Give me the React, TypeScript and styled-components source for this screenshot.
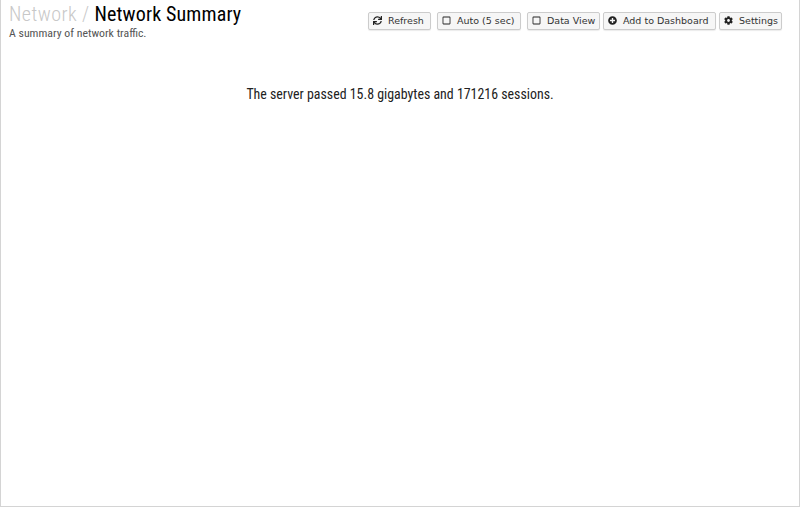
import styled, { createGlobalStyle } from 'styled-components'
import { FaSync, FaRegSquare, FaPlusCircle, FaCog } from 'react-icons/fa'

const GlobalStyle = createGlobalStyle`
  html, body {
    margin: 0;
    padding: 0;
    height: 100%;
    background: #fff;
  }
  #root {
    height: 100%;
  }
`

const Page = styled.div`
  box-sizing: border-box;
  width: 800px;
  height: 507px;
  border: 1px solid #d4d4d4;
  border-top: none;
  font-family: Roboto, sans-serif;
  font-stretch: 87%;
  color: #222;
`

const Header = styled.div`
  display: flex;
  justify-content: space-between;
  align-items: flex-start;
  padding: 2px 17px 0 8px;
`

const TitleBlock = styled.div`
  display: flex;
  flex-direction: column;
`

const Title = styled.h1`
  margin: 0;
  font-size: 20px;
  line-height: 24px;
  font-weight: 400;
  letter-spacing: 0.13px;
  color: #000;
  white-space: pre;
`

const Parent = styled.span`
  color: #c8c8c8;
  font-weight: 300;
  letter-spacing: 0.45px;
`

const Subtitle = styled.div`
  font-size: 11.8px;
  line-height: 14px;
  color: #555;
`

const Toolbar = styled.div`
  display: flex;
  gap: 3px;
  margin-top: 10px;
`

const Button = styled.button<{ $gap?: number; $width: number }>`
  display: flex;
  align-items: center;
  gap: 6px;
  box-sizing: border-box;
  width: ${p => p.$width}px;
  height: 18px;
  padding: 0 0 1px 4px;
  margin-right: ${p => p.$gap ?? 0}px;
  border: 1px solid #ccc;
  border-radius: 2px;
  background: #f6f6f6;
  box-shadow: 0 1px 1px rgba(0, 0, 0, 0.08);
  font-family: 'DejaVu Sans', sans-serif;
  font-size: 9.5px;
  font-stretch: 100%;
  color: #333;
  white-space: nowrap;
  svg {
    width: 9px;
    height: 9px;
    color: #222;
  }
`

const Message = styled.p`
  margin: 45px 0 0;
  text-align: center;
  font-size: 13.9px;
  line-height: 18px;
  color: #222;
`

export default function App() {
  return (
    <>
      <GlobalStyle />
      <Page>
        <Header>
          <TitleBlock>
            <Title>
              <Parent>Network / </Parent>Network Summary
            </Title>
            <Subtitle>A summary of network traffic.</Subtitle>
          </TitleBlock>
          <Toolbar>
            <Button $width={63} $gap={3}>
              <FaSync /> Refresh
            </Button>
            <Button $width={84} $gap={3}>
              <FaRegSquare /> Auto (5 sec)
            </Button>
            <Button $width={73}>
              <FaRegSquare /> Data View
            </Button>
            <Button $width={113}>
              <FaPlusCircle /> Add to Dashboard
            </Button>
            <Button $width={63}>
              <FaCog /> Settings
            </Button>
          </Toolbar>
        </Header>
        <Message>The server passed 15.8 gigabytes and 171216 sessions.</Message>
      </Page>
    </>
  )
}
